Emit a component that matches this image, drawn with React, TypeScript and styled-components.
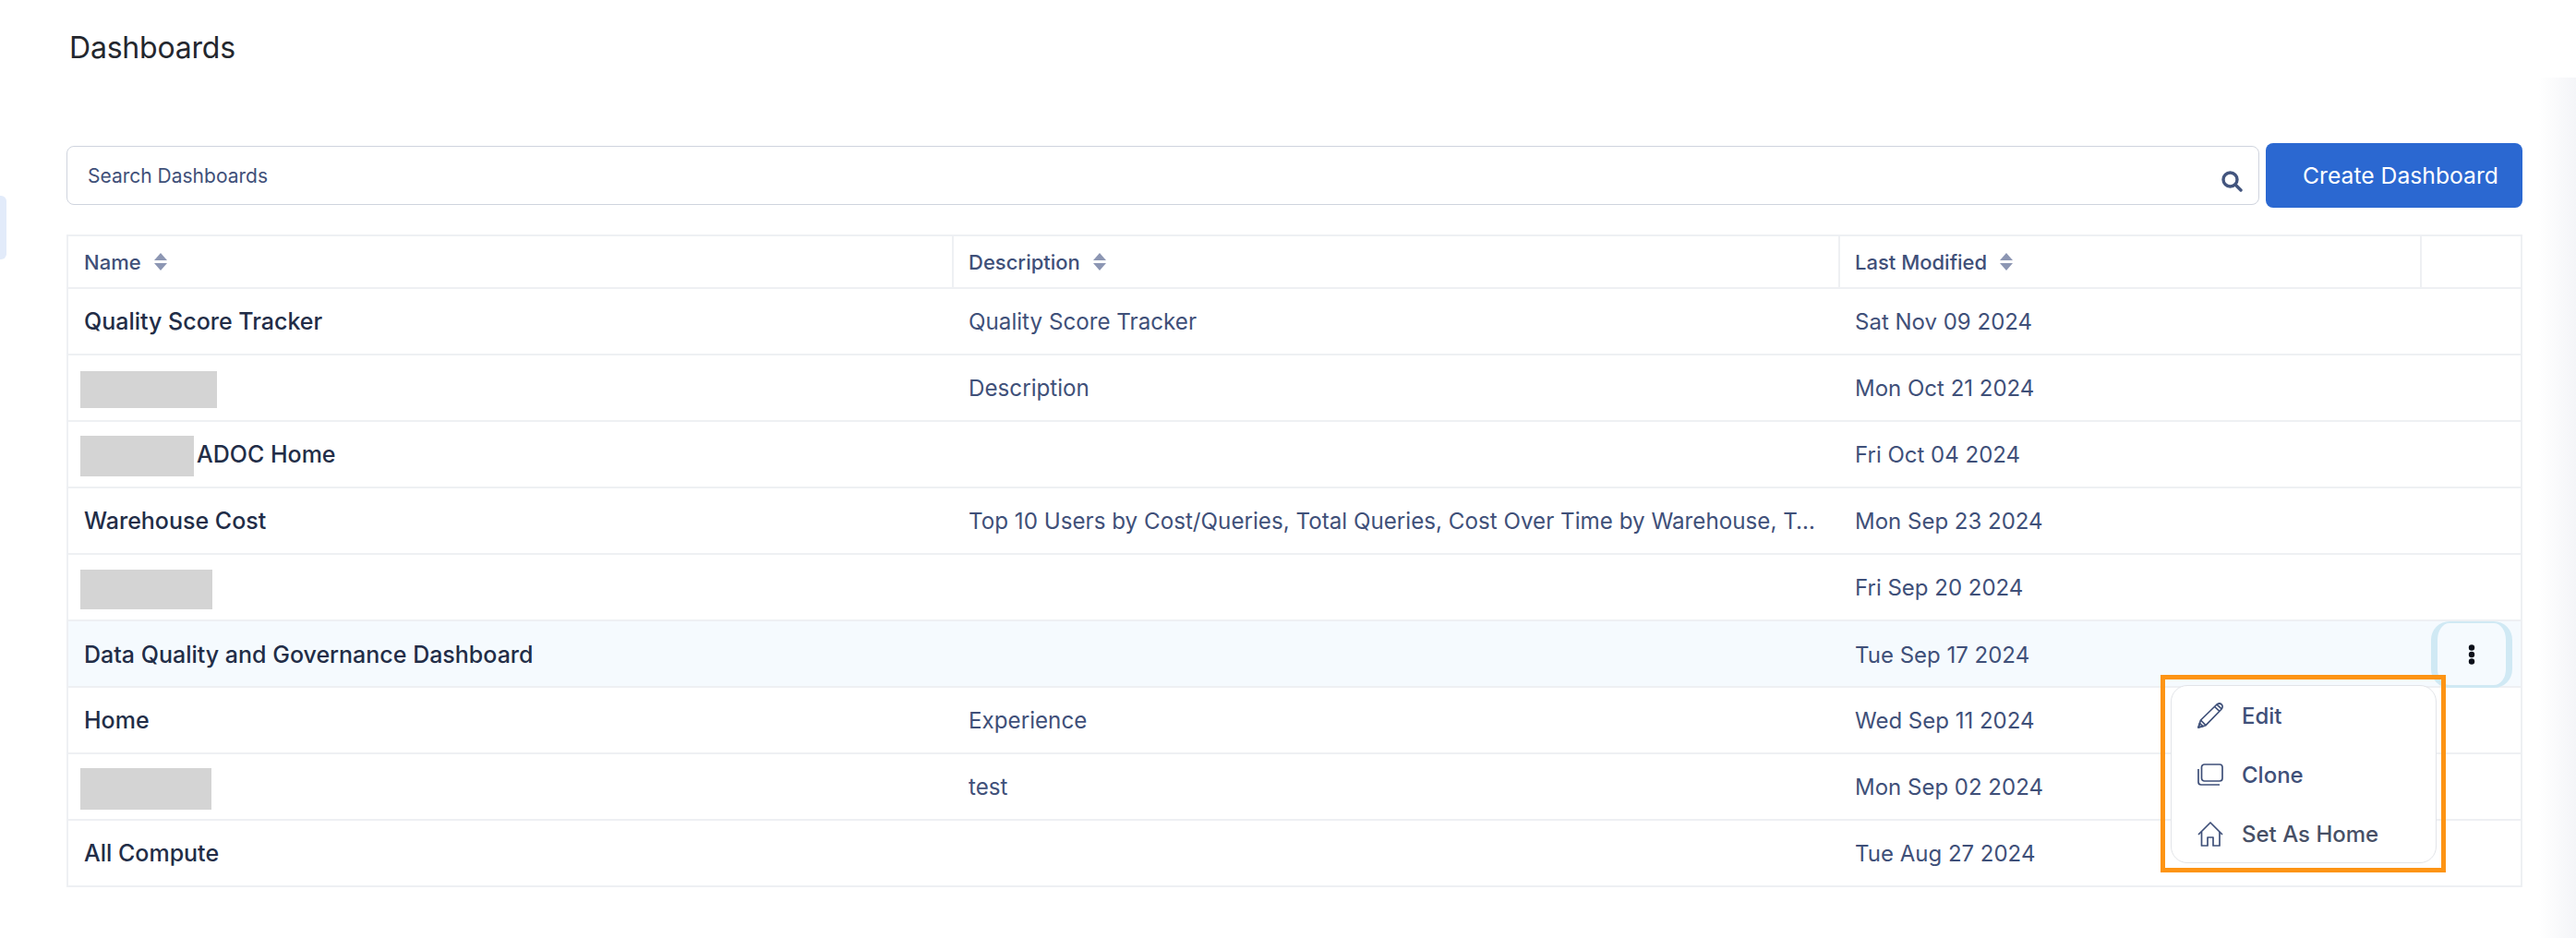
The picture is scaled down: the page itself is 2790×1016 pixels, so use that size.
import React from "react";
import styled, { createGlobalStyle } from "styled-components";

const Global = createGlobalStyle`
  html, body { margin: 0; padding: 0; background: #fff; }
  body { font-family: Inter, "Noto Sans", sans-serif; }
`;

const Page = styled.div`
  position: relative;
  width: 2790px;
  height: 1016px;
  overflow: hidden;
  box-sizing: border-box;
  padding: 0 58px 0 72px;
  background: #fff;
`;

const SideTab = styled.div`
  position: absolute;
  left: 0;
  top: 212px;
  width: 7px;
  height: 69px;
  background: #e2ebfa;
  border-radius: 0 6px 6px 0;
`;

const EdgeShade = styled.div`
  position: absolute;
  right: 0;
  top: 84px;
  bottom: 0;
  width: 40px;
  background: linear-gradient(to right, #ffffff, #f4f5f8);
`;

const Title = styled.h1`
  margin: 0;
  padding: 34px 0 0 3px;
  height: 155px;
  box-sizing: border-box;
  font-size: 32px;
  line-height: 36px;
  font-weight: 400;
  color: #24272e;
  letter-spacing: -0.2px;
`;

const Toolbar = styled.div`
  display: flex;
  align-items: center;
  gap: 7px;
  height: 70px;
`;

const SearchBox = styled.div`
  flex: 1;
  height: 64px;
  box-sizing: border-box;
  border: 1.5px solid #cfd4de;
  border-radius: 8px;
  display: flex;
  align-items: center;
  justify-content: space-between;
  padding: 0 17px 0 22px;
  font-size: 21px;
  color: #3f5079;
  svg { margin-top: 11px; }
`;

const CreateButton = styled.button`
  width: 278px;
  height: 70px;
  border: 0;
  padding: 0 0 0 14px;
  border-radius: 8px;
  background: #2b68d1;
  color: #fff;
  font-family: inherit;
  font-size: 24.7px;
  font-weight: 400;
`;

const Table = styled.div`
  position: relative;
  margin-top: 29px;
  border-left: 2px solid #eef0f3;
  border-right: 2px solid #eef0f3;
  border-top: 2px solid #eef0f3;
`;

const Row = styled.div<{ $active?: boolean; $head?: boolean }>`
  display: grid;
  grid-template-columns: 959px 960px 630px 1fr;
  height: ${(p) => (p.$head ? "57px" : "72px")};
  box-sizing: border-box;
  border-bottom: 2px solid #eef0f3;
  background: ${(p) => (p.$active ? "#f5fafe" : "#fff")};
`;

const HeadCell = styled.div`
  display: flex;
  align-items: center;
  gap: 14px;
  padding-left: 16px;
  font-size: 22px;
  font-weight: 450;
  color: #3f5079;
  border-right: 2px solid #eef0f3;
  &:first-child { padding-left: 17px; }
  &:last-child { border-right: 0; }
`;

const NameCell = styled.div`
  display: flex;
  align-items: center;
  padding: 0 0 0 17px;
  font-size: 25px;
  font-weight: 450;
  color: #222d47;
  white-space: nowrap;
`;

const DescCell = styled.div`
  display: flex;
  align-items: center;
  padding: 1px 0 0 16px;
  font-size: 25px;
  color: #3f5079;
  min-width: 0;
`;

const DateCell = styled.div`
  display: flex;
  align-items: center;
  padding: 1px 0 0 16px;
  font-size: 24px;
  color: #3f5079;
`;

const Clip = styled.span`
  display: block;
  width: 921px;
  font-size: 24.2px;
  overflow: hidden;
  white-space: nowrap;
  text-overflow: ellipsis;
`;

const ActionCell = styled.div`
  display: flex;
  justify-content: flex-end;
  padding-right: 9px;
`;

const Redacted = styled.span<{ $w: number; $h: number }>`
  display: block;
  flex: none;
  width: ${(p) => p.$w}px;
  height: ${(p) => p.$h}px;
  margin: 4px 3px 0 -4px;
  background: #d4d4d4;
`;

const KebabButton = styled.div`
  width: 88px;
  height: 72px;
  box-sizing: border-box;
  border: 7px solid #d0e9f4;
  border-bottom-width: 3px;
  border-top-width: 2px;
  border-radius: 20px;
  display: flex;
  align-items: center;
  justify-content: center;
  background: #f5fafe;
`;

const Highlight = styled.div`
  position: absolute;
  left: 2266px;
  top: 475px;
  width: 309px;
  height: 214px;
  box-sizing: border-box;
  border: 5px solid #fd9414;
  padding: 6px 5px 5px 6px;
`;

const Menu = styled.div`
  height: 100%;
  box-sizing: border-box;
  background: #fff;
  border: 1.5px solid #e2e4e8;
  border-radius: 18px;
  padding: 0 0 0 28px;
`;

const MenuItem = styled.div<{ $dark?: boolean }>`
  display: flex;
  align-items: center;
  gap: 20px;
  height: 64px;
  font-size: 24px;
  font-weight: 500;
  color: ${(p) => (p.$dark ? "#475066" : "#3f5079")};
`;

const Sort = () => (
  <svg width="14" height="19" viewBox="0 0 14 19" fill="#8c96b3">
    <path d="M7 0 L14 8 H0 Z" />
    <path d="M0 11 H14 L7 19 Z" />
  </svg>
);

const SearchIcon = () => (
  <svg width="24" height="24" viewBox="0 0 24 24" fill="none" stroke="#43557e" strokeWidth="3.4" strokeLinecap="round">
    <circle cx="10.5" cy="10.5" r="7.5" />
    <path d="M16.5 16.5 L22 22" />
  </svg>
);

const Dots = () => (
  <svg width="8" height="22" viewBox="0 0 8 22" fill="#0b0f1a">
    <circle cx="4" cy="3.5" r="3.2" />
    <circle cx="4" cy="11" r="3.2" />
    <circle cx="4" cy="18.5" r="3.2" />
  </svg>
);

const PencilIcon = () => (
  <svg width="28" height="28" viewBox="0 0 28 28" fill="none" stroke="#3f5079" strokeWidth="1.7" strokeLinejoin="round">
    <path d="M1 27 L3.5 19 L20.5 2.5 C22.4 0.8 24.8 0.8 26.2 2.2 C27.6 3.6 27.4 5.9 25.7 7.5 L9 24.7 Z" />
    <path d="M3.5 19 L9 24.7 M18.6 4.5 L23.9 9.4 M21 2.2 L26.2 6.8 M1 27 L6 25.6 L2.4 22.4 Z" />
  </svg>
);

const CloneIcon = () => (
  <svg width="28" height="24" viewBox="0 0 28 24" fill="none" stroke="#3f5079" strokeWidth="1.7">
    <rect x="4.5" y="1" width="22.5" height="18" rx="3" />
    <path d="M1 6 V20 C1 22 2.2 23 4 23 H24" />
  </svg>
);

const HomeIcon = () => (
  <svg width="28" height="27" viewBox="0 0 28 27" fill="none" stroke="#3f5079" strokeWidth="1.7" strokeLinejoin="round">
    <path d="M1 14 L14 1 L27 14" />
    <path d="M4.5 11 V26 H11 V17 H17 V26 H24 V11" />
  </svg>
);

type R = {
  name?: string;
  red?: [number, number];
  desc?: string;
  date: string;
  active?: boolean;
};

const rows: R[] = [
  { name: "Quality Score Tracker", desc: "Quality Score Tracker", date: "Sat Nov 09 2024" },
  { red: [148, 40], desc: "Description", date: "Mon Oct 21 2024" },
  { red: [123, 44], name: "ADOC Home", date: "Fri Oct 04 2024" },
  { name: "Warehouse Cost", desc: "Top 10 Users by Cost/Queries, Total Queries, Cost Over Time by Warehouse, Total Cost by Warehouse", date: "Mon Sep 23 2024" },
  { red: [143, 43], date: "Fri Sep 20 2024" },
  { name: "Data Quality and Governance Dashboard", date: "Tue Sep 17 2024", active: true },
  { name: "Home", desc: "Experience", date: "Wed Sep 11 2024" },
  { red: [142, 45], desc: "test", date: "Mon Sep 02 2024" },
  { name: "All Compute", date: "Tue Aug 27 2024" },
];

export default function App() {
  return (
    <Page>
      <Global />
      <SideTab />
      <EdgeShade />
      <Title>Dashboards</Title>
      <Toolbar>
        <SearchBox>
          Search Dashboards
          <SearchIcon />
        </SearchBox>
        <CreateButton>Create Dashboard</CreateButton>
      </Toolbar>
      <Table>
        <Row $head>
          <HeadCell>Name <Sort /></HeadCell>
          <HeadCell>Description <Sort /></HeadCell>
          <HeadCell>Last Modified <Sort /></HeadCell>
          <HeadCell />
        </Row>
        {rows.map((r) => (
          <Row key={r.date} $active={r.active}>
            <NameCell>
              {r.red && <Redacted $w={r.red[0]} $h={r.red[1]} />}
              {r.name}
            </NameCell>
            <DescCell>{r.desc && <Clip>{r.desc}</Clip>}</DescCell>
            <DateCell>{r.date}</DateCell>
            <ActionCell>
              {r.active && (
                <KebabButton>
                  <Dots />
                </KebabButton>
              )}
            </ActionCell>
          </Row>
        ))}
        <Highlight>
          <Menu>
            <MenuItem><PencilIcon />Edit</MenuItem>
            <MenuItem><CloneIcon />Clone</MenuItem>
            <MenuItem $dark><HomeIcon />Set As Home</MenuItem>
          </Menu>
        </Highlight>
      </Table>
    </Page>
  );
}
